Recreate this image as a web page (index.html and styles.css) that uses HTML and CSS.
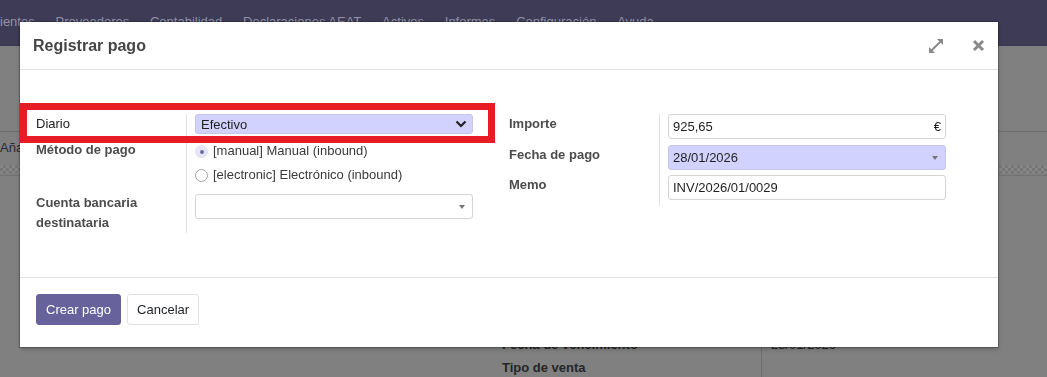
FILE: index.html
```html
<!DOCTYPE html>
<html lang="es">
<head>
    <meta charset="UTF-8">
    <title>Registrar pago</title>
    <link rel="stylesheet" href="styles.css">
</head>
<body>
    <header class="navbar">
        <nav class="menu">
            <span>ientes</span>
            <span>Proveedores</span>
            <span>Contabilidad</span>
            <span>Declaraciones AEAT</span>
            <span>Activos</span>
            <span>Informes</span>
            <span>Configuración</span>
            <span>Ayuda</span>
        </nav>
    </header>
    <div class="page">
        <div class="breadcrumb"></div>
        <div class="control-panel"><span class="btn-add">Añadir</span></div>
        <div class="checker"></div>
        <div class="sheet">
            <div class="sheet-group">
                <div class="sheet-label">Fecha de vencimiento</div>
                <div class="sheet-value">28/01/2026</div>
                <div class="sheet-label">Tipo de venta</div>
                <div class="sheet-value"></div>
            </div>
        </div>
    </div>

    <div class="modal">
        <div class="modal-header">
            <h4 class="modal-title">Registrar pago</h4>
            <div class="modal-tools">
                <svg class="icon" width="16" height="16" viewBox="0 0 16 16">
                    <line x1="3.5" y1="12.5" x2="12.5" y2="3.5" stroke="#8a8a8a" stroke-width="2"/>
                    <polygon points="9,1 15,1 15,7" fill="#8a8a8a"/>
                    <polygon points="1,9 1,15 7,15" fill="#8a8a8a"/>
                </svg>
                <svg class="icon" width="13" height="13" viewBox="0 0 13 13">
                    <path d="M2 2 L11 11 M11 2 L2 11" stroke="#8a8a8a" stroke-width="3"/>
                </svg>
            </div>
        </div>
        <div class="modal-body">
            <div class="group">
                <div class="label plain">Diario</div>
                <div class="field row-diario">
                    <div class="select required">
                        <span>Efectivo</span>
                        <svg width="12" height="8" viewBox="0 0 12 8"><path d="M1.5 1.5 L6 6 L10.5 1.5" fill="none" stroke="#222" stroke-width="2.2"/></svg>
                    </div>
                </div>
                <div class="label">Método de pago</div>
                <div class="field row-metodo">
                    <label class="radio"><span class="dot checked"></span>[manual] Manual (inbound)</label>
                    <label class="radio"><span class="dot"></span>[electronic] Electrónico (inbound)</label>
                </div>
                <div class="label two-lines">Cuenta bancaria destinataria</div>
                <div class="field row-cuenta">
                    <div class="input"><span></span><i class="caret"></i></div>
                </div>
            </div>
            <div class="group">
                <div class="label">Importe</div>
                <div class="field row-a">
                    <div class="input"><span>925,65</span><span>€</span></div>
                </div>
                <div class="label">Fecha de pago</div>
                <div class="field row-b">
                    <div class="input required"><span>28/01/2026</span><i class="caret"></i></div>
                </div>
                <div class="label">Memo</div>
                <div class="field row-a">
                    <div class="input"><span>INV/2026/01/0029</span></div>
                </div>
            </div>
        </div>
        <div class="modal-footer">
            <button class="btn btn-primary">Crear pago</button>
            <button class="btn btn-secondary">Cancelar</button>
        </div>
        <div class="highlight"></div>
    </div>
</body>
</html>
```

FILE: styles.css
```css
body {
    margin: 0;
    background-color: #808080;
    font-family: "Liberation Sans", Arial, sans-serif;
    font-size: 13px;
    overflow: hidden;
}
.navbar {
    height: 46px;
    background-color: #3d3b55;
    overflow: hidden;
}
.menu {
    display: flex;
}
.menu span {
    padding: 0 10.4px;
    line-height: 44px;
    color: #9291a6;
    white-space: nowrap;
}
.menu span:first-child {
    padding-left: 0;
}
.breadcrumb {
    height: 85px;
    border-bottom: 1px solid #6e6e6e;
}
.control-panel {
    height: 33px;
    display: flex;
    align-items: center;
}
.btn-add {
    color: #2b2b2b;
    margin-top: -2px;
}
.checker {
    height: 10px;
    border-bottom: 1px solid #727272;
    background: repeating-conic-gradient(#777 0 25%, #868686 0 50%) 0 0 / 6px 6px;
}
.sheet {
    padding-top: 157px;
}
.sheet-group {
    display: grid;
    grid-template-columns: 260px 1fr;
    margin-left: 502px;
}
.sheet-label {
    box-sizing: border-box;
    border-right: 1px solid #6e6e6e;
    font-weight: bold;
    color: #262626;
    line-height: 23px;
}
.sheet-value {
    padding-left: 9px;
    color: #262626;
    line-height: 23px;
}

/* dialog */
.modal {
    position: fixed;
    left: 20px;
    top: 22px;
    width: 978px;
    height: 325px;
    background: #fff;
    display: flex;
    flex-direction: column;
    box-shadow: 0 0 0 1px rgba(0, 0, 0, 0.2), 0 2px 4px rgba(0, 0, 0, 0.25);
}
.modal-header {
    height: 48px;
    box-sizing: border-box;
    border-bottom: 1px solid #dee2e6;
    display: flex;
    align-items: center;
    justify-content: space-between;
    padding: 0 13px;
}
.modal-title {
    margin: 0;
    font-size: 16px;
    font-weight: bold;
    color: #454545;
}
.modal-tools {
    display: flex;
    align-items: center;
    gap: 28px;
}
.icon {
    display: block;
}
.modal-body {
    flex: 1;
    display: grid;
    grid-template-columns: 473px 473px;
    align-items: start;
    padding: 44px 16px 0;
}
.group {
    display: grid;
    grid-template-columns: 151px 1fr;
}
.label {
    box-sizing: border-box;
    border-right: 1px solid #dee2e6;
    font-weight: bold;
    color: #4c4c4c;
    line-height: 20px;
}
.label.plain {
    font-weight: normal;
    color: #222;
}
.field {
    padding: 0 36px 0 8px;
}
.row-diario { padding-bottom: 6px; }
.row-metodo { padding-bottom: 7px; }
.row-cuenta { padding-top: 1px; }
.row-a { padding-bottom: 6px; }
.row-b { padding-bottom: 5px; }
.select, .input {
    box-sizing: border-box;
    display: flex;
    align-items: center;
    justify-content: space-between;
    border: 1px solid #d4d4d4;
    border-radius: 3px;
    color: #1f1f1f;
}
.select {
    height: 20px;
    padding: 0 5px;
}
.input {
    height: 25px;
    padding: 0 4px;
}
.required {
    background-color: #d2d2ff;
    border-color: #c6c6ee;
}
.caret {
    width: 0;
    height: 0;
    border-top: 4px solid #777;
    border-left: 3px solid transparent;
    border-right: 3px solid transparent;
    margin-right: 3px;
}
.radio {
    display: flex;
    align-items: center;
    line-height: 22px;
    color: #3a3a3a;
}
.radio + .radio {
    margin-top: 2px;
}
.dot {
    box-sizing: border-box;
    width: 13px;
    height: 13px;
    border-radius: 50%;
    border: 1px solid #a2a2a2;
    background: #fff;
    margin-right: 5px;
    position: relative;
}
.dot.checked {
    border-color: #e2e2f2;
    background: #e6e6f6;
}
.dot.checked::after {
    content: "";
    position: absolute;
    left: 4px;
    top: 4px;
    width: 4px;
    height: 4px;
    border-radius: 50%;
    background: #6d6d9e;
}
.modal-footer {
    height: 70px;
    box-sizing: border-box;
    border-top: 1px solid #dee2e6;
    padding: 16px;
    display: flex;
    align-items: flex-start;
    gap: 6px;
}
.btn {
    height: 31px;
    padding: 0 9px;
    font-family: inherit;
    font-size: 13px;
    border-radius: 3px;
}
.btn-primary {
    background-color: #67619c;
    border: 1px solid #67619c;
    color: #fff;
}
.btn-secondary {
    background: #fff;
    border: 1px solid #dee2e6;
    color: #212529;
}
.highlight {
    position: absolute;
    left: 0;
    top: 81px;
    width: 475px;
    height: 40px;
    box-sizing: border-box;
    border: 7px solid #e81c24;
}
```
